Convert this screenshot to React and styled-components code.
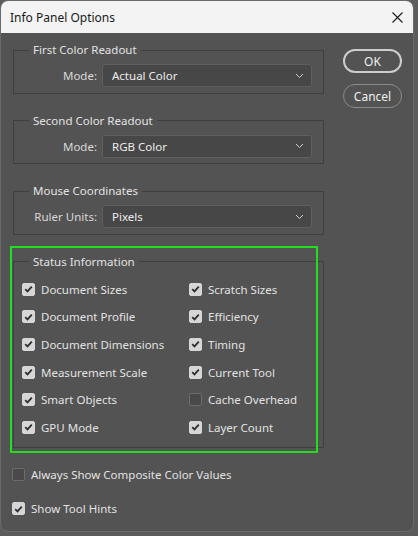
import React from "react";
import styled, { createGlobalStyle } from "styled-components";

const GlobalStyle = createGlobalStyle`
  html, body {
    margin: 0;
    padding: 0;
    background: #5c5c5c;
  }
  body {
    font-family: "Noto Sans", "Open Sans", sans-serif;
    width: 418px;
    height: 536px;
    overflow: hidden;
  }
`;

const statusItems = [
  ["Document Sizes", true, "Scratch Sizes", true],
  ["Document Profile", true, "Efficiency", true],
  ["Document Dimensions", true, "Timing", true],
  ["Measurement Scale", true, "Current Tool", true],
  ["Smart Objects", true, "Cache Overhead", false],
  ["GPU Mode", true, "Layer Count", true],
];

function CheckIcon() {
  return (
    <svg width="9" height="8" viewBox="0 0 9 8">
      <path
        d="M1.2 4.2 L3.5 6.4 L7.8 1.6"
        fill="none"
        stroke="#2e2e2e"
        strokeWidth="1.8"
      />
    </svg>
  );
}

function Check({ label, checked }) {
  return (
    <CheckRow>
      <Box $checked={checked}>{checked && <CheckIcon />}</Box>
      <span>{label}</span>
    </CheckRow>
  );
}

function Select({ value }) {
  return (
    <SelectBox>
      <span>{value}</span>
      <svg width="9" height="6" viewBox="0 0 9 6">
        <path d="M1 1 L4.5 4.5 L8 1" fill="none" stroke="#cfcfcf" strokeWidth="1" />
      </svg>
    </SelectBox>
  );
}

function App() {
  return (
    <>
      <GlobalStyle />
      <Dialog>
        <TitleBar>
          <span>Info Panel Options</span>
          <svg width="11" height="11" viewBox="0 0 11 11">
            <path d="M0.5 0.5 L10.5 10.5 M10.5 0.5 L0.5 10.5" stroke="#1b1b1b" strokeWidth="1.1" />
          </svg>
        </TitleBar>
        <Body>
          <Main>
            <Group>
              <Legend>First Color Readout</Legend>
              <FieldRow>
                <Label>Mode:</Label>
                <Select value="Actual Color" />
              </FieldRow>
            </Group>
            <Group>
              <Legend>Second Color Readout</Legend>
              <FieldRow>
                <Label>Mode:</Label>
                <Select value="RGB Color" />
              </FieldRow>
            </Group>
            <Group>
              <Legend>Mouse Coordinates</Legend>
              <FieldRow>
                <Label>Ruler Units:</Label>
                <Select value="Pixels" />
              </FieldRow>
            </Group>
            <StatusWrap>
              <Group $last>
                <Legend>Status Information</Legend>
                <StatusGrid>
                  {statusItems.map(([a, ca, b, cb]) => (
                    <React.Fragment key={a}>
                      <Check label={a} checked={ca} />
                      <Check label={b} checked={cb} />
                    </React.Fragment>
                  ))}
                </StatusGrid>
              </Group>
              <Highlight />
            </StatusWrap>
            <Options>
              <Check label="Always Show Composite Color Values" checked={false} />
              <Check label="Show Tool Hints" checked={true} />
            </Options>
          </Main>
          <Buttons>
            <Button $primary>OK</Button>
            <Button>Cancel</Button>
          </Buttons>
        </Body>
      </Dialog>
    </>
  );
}

const Dialog = styled.div`
  width: 412px;
  height: 530px;
  background: #535353;
  border: 1px solid #6a6a6a;
  border-radius: 8px;
  overflow: hidden;
  display: flex;
  flex-direction: column;
`;

const TitleBar = styled.div`
  height: 32px;
  flex: none;
  background: #f3f3f3;
  display: flex;
  align-items: center;
  justify-content: space-between;
  padding: 0 10px 0 9px;
  font-size: 12px;
  color: #1a1a1a;
`;

const Body = styled.div`
  display: flex;
  padding: 10px 0 0 12px;
`;

const Main = styled.div`
  width: 311px;
  display: flex;
  flex-direction: column;
`;

const Group = styled.fieldset`
  margin: 0 0 ${(p) => (p.$last ? "0" : "20px")} 0;
  padding: 7px 11px 5.5px 4px;
  border: 1px solid #3f3f3f;
  min-width: 0;
`;

const Legend = styled.legend`
  margin-left: 11px;
  padding: 0 4px;
  font-size: 11.5px;
  line-height: 14px;
  color: #e2e2e2;
`;

const FieldRow = styled.div`
  display: flex;
  align-items: center;
  gap: 5px;
`;

const Label = styled.span`
  width: 79px;
  text-align: right;
  font-size: 11.5px;
  color: #d8d8d8;
`;

const SelectBox = styled.div`
  width: 210px;
  height: 23px;
  box-sizing: border-box;
  background: #474747;
  border: 1px solid #5f5f5f;
  border-radius: 3px;
  display: flex;
  align-items: center;
  justify-content: space-between;
  padding: 0 7px 0 9px;
  font-size: 11.5px;
  color: #ececec;
`;

const StatusWrap = styled.div`
  position: relative;
`;

const Highlight = styled.div`
  position: absolute;
  left: -3px;
  top: -9px;
  width: 304px;
  height: 203px;
  border: 2px solid #22dd22;
  pointer-events: none;
`;

const StatusGrid = styled.div`
  display: grid;
  grid-template-columns: 167px 1fr;
  grid-auto-rows: 27.6px;
  padding: 0 0 0 4px;
`;

const CheckRow = styled.div`
  display: flex;
  align-items: center;
  gap: 6px;
  font-size: 11.5px;
  color: #e2e2e2;
  white-space: nowrap;
`;

const Box = styled.span`
  width: 13px;
  height: 13px;
  box-sizing: border-box;
  border-radius: 2px;
  display: flex;
  align-items: center;
  justify-content: center;
  background: ${(p) => (p.$checked ? "#d6d6d6" : "#494949")};
  border: 1px solid ${(p) => (p.$checked ? "#d6d6d6" : "#6b6b6b")};
`;

const Options = styled.div`
  display: grid;
  grid-auto-rows: 20px;
  row-gap: 14px;
  margin: 17px 0 0 -1px;
`;

const Buttons = styled.div`
  display: flex;
  flex-direction: column;
  gap: 11px;
  margin: 6px 0 0 19px;
`;

const Button = styled.div`
  width: 59px;
  height: 24px;
  box-sizing: border-box;
  border-radius: 12px;
  display: flex;
  align-items: center;
  justify-content: center;
  font-size: 12px;
  color: #eeeeee;
  border: ${(p) => (p.$primary ? "2px solid #cdcdcd" : "1px solid #8a8a8a")};
`;

export default App;
